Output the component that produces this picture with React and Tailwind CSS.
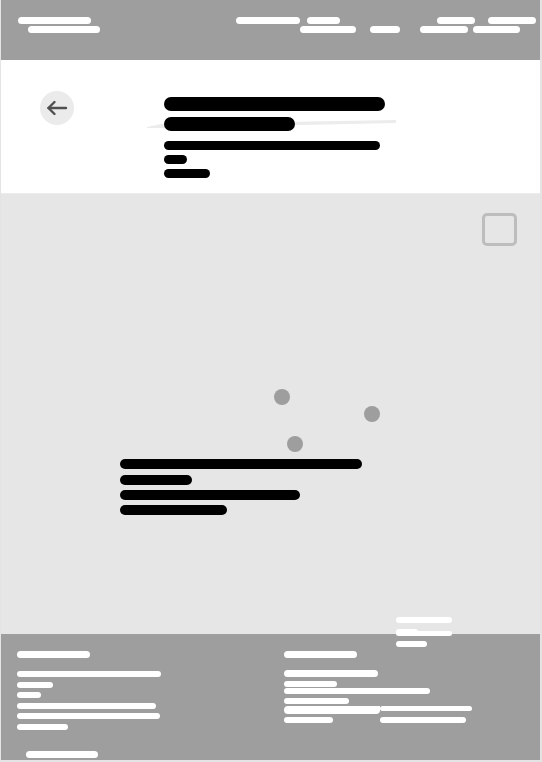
import React from "react";

export default function App() {
  return (
    <div className="w-[542px] h-[762px] overflow-hidden bg-white border-l border-r-2 border-b-2 border-[#e4e4e4] flex flex-col" style={{ fontFamily: '"Liberation Sans", Arial, sans-serif' }}>
      {/* Header */}
      <div className="h-[60px] shrink-0 bg-[#9e9e9e] flex items-start pt-[17px]">
        <div className="ml-[17px] flex flex-col gap-[2px]">
          <div className="w-[73px] h-[7px] rounded-full bg-white" />
          <div className="ml-[10px] w-[72px] h-[7px] rounded-full bg-white" />
        </div>
        <div className="ml-[136px] flex flex-col gap-[2px]">
          <div className="flex gap-[7px]">
            <div className="w-[64px] h-[7px] rounded-full bg-white" />
            <div className="w-[33px] h-[7px] rounded-full bg-white" />
          </div>
          <div className="ml-[64px] w-[56px] h-[7px] rounded-full bg-white" />
        </div>
        <div className="ml-[14px] mt-[9px] w-[30px] h-[7px] rounded-full bg-white" />
        <div className="ml-[20px] flex flex-col gap-[2px]">
          <div className="flex">
            <div className="ml-[17px] w-[38px] h-[7px] rounded-full bg-white" />
            <div className="ml-[13px] w-[48px] h-[7px] rounded-full bg-white" />
          </div>
          <div className="flex">
            <div className="w-[48px] h-[7px] rounded-full bg-white" />
            <div className="ml-[5px] w-[47px] h-[7px] rounded-full bg-white" />
          </div>
        </div>
      </div>

      {/* Hero */}
      <div className="h-[134px] shrink-0 bg-white border-b border-[#ececec] flex items-start">
        <button className="ml-[39px] mt-[31px] w-[34px] h-[34px] rounded-full bg-[#ebebeb] flex items-center justify-center">
          <svg width="22" height="16" viewBox="0 0 22 16" fill="none" stroke="#505050" strokeWidth="2.4" strokeLinecap="round" strokeLinejoin="round">
            <path d="M20 8H2.5" />
            <path d="M8.5 2 2.5 8l6 6" />
          </svg>
        </button>
        <div className="ml-[90px] mt-[37px] flex flex-col relative">
          <div className="w-[221px] h-[14px] rounded-full bg-black" />
          <div className="relative mt-[6px] h-[14px]">
            <svg className="absolute left-[-17px] top-[2px]" width="250" height="10" viewBox="0 0 250 10">
              <polygon points="0,8 14,5 249,1 249,4 14,9 0,9" fill="#ececec" />
            </svg>
            <div className="relative w-[131px] h-[14px] rounded-full bg-black" />
          </div>
          <div className="mt-[10px] w-[216px] h-[9px] rounded-full bg-black" />
          <div className="mt-[5px] w-[23px] h-[9px] rounded-full bg-black" />
          <div className="mt-[5px] w-[46px] h-[9px] rounded-full bg-black" />
        </div>
      </div>

      {/* Content area */}
      <div className="h-[440px] shrink-0 bg-[#e6e6e6] relative flex flex-col">
        <div className="flex justify-end pr-[23px] pt-[19px]">
          <div className="w-[35px] h-[33px] rounded-[5px] border-[3px] border-[#bdbdbd]" />
        </div>
        <div className="absolute left-[273px] top-[195px] w-[16px] h-[16px] rounded-full bg-[#9e9e9e]" />
        <div className="absolute left-[363px] top-[212px] w-[16px] h-[16px] rounded-full bg-[#9e9e9e]" />
        <div className="absolute left-[286px] top-[242px] w-[16px] h-[16px] rounded-full bg-[#9e9e9e]" />
        <div className="ml-[119px] mt-[213px] flex flex-col">
          <div className="w-[242px] h-[10px] rounded-full bg-black" />
          <div className="mt-[6px] w-[72px] h-[10px] rounded-full bg-black" />
          <div className="mt-[5px] w-[180px] h-[10px] rounded-full bg-black" />
          <div className="mt-[5px] w-[107px] h-[10px] rounded-full bg-black" />
        </div>
        <div className="absolute left-[395px] top-[423px] z-10 flex flex-col">
          <div className="w-[56px] h-[6px] rounded-full bg-white" />
          <div className="mt-[6px] relative h-[7px]">
            <div className="absolute left-0 top-0 w-[22px] h-[6px] rounded-full bg-white" />
            <div className="absolute left-0 top-[2px] w-[56px] h-[5px] rounded-full bg-white" />
          </div>
          <div className="mt-[5px] w-[31px] h-[6px] rounded-full bg-white" />
        </div>
      </div>

      {/* Footer */}
      <div className="flex-1 bg-[#9e9e9e] flex items-start pt-[17px]">
        <div className="w-[283px] shrink-0 pl-[16px] flex flex-col">
          <div className="w-[73px] h-[7px] rounded-full bg-white" />
          <div className="mt-[13px] w-[144px] h-[6px] rounded-full bg-white" />
          <div className="mt-[5px] w-[36px] h-[6px] rounded-full bg-white" />
          <div className="mt-[4px] w-[24px] h-[6px] rounded-full bg-white" />
          <div className="mt-[5px] w-[139px] h-[6px] rounded-full bg-white" />
          <div className="mt-[4px] w-[143px] h-[6px] rounded-full bg-white" />
          <div className="mt-[5px] w-[51px] h-[6px] rounded-full bg-white" />
          <div className="ml-[9px] mt-[21px] w-[72px] h-[7px] rounded-full bg-white" />
        </div>
        <div className="flex flex-col">
          <div className="w-[73px] h-[7px] rounded-full bg-white" />
          <div className="mt-[12px] w-[94px] h-[7px] rounded-full bg-white" />
          <div className="mt-[4px] w-[53px] h-[6px] rounded-full bg-white" />
          <div className="mt-[1px] w-[146px] h-[6px] rounded-full bg-white" />
          <div className="mt-[4px] w-[65px] h-[6px] rounded-full bg-white" />
          <div className="mt-[2px] flex items-start">
            <div className="w-[96px] h-[8px] rounded-full rounded-tr-none bg-white" />
            <div className="w-[92px] h-[5px] rounded-full bg-white" />
          </div>
          <div className="mt-[3px] flex items-start">
            <div className="w-[49px] h-[6px] rounded-full bg-white" />
            <div className="ml-[47px] w-[86px] h-[6px] rounded-full bg-white" />
          </div>
        </div>
      </div>
    </div>
  );
}
